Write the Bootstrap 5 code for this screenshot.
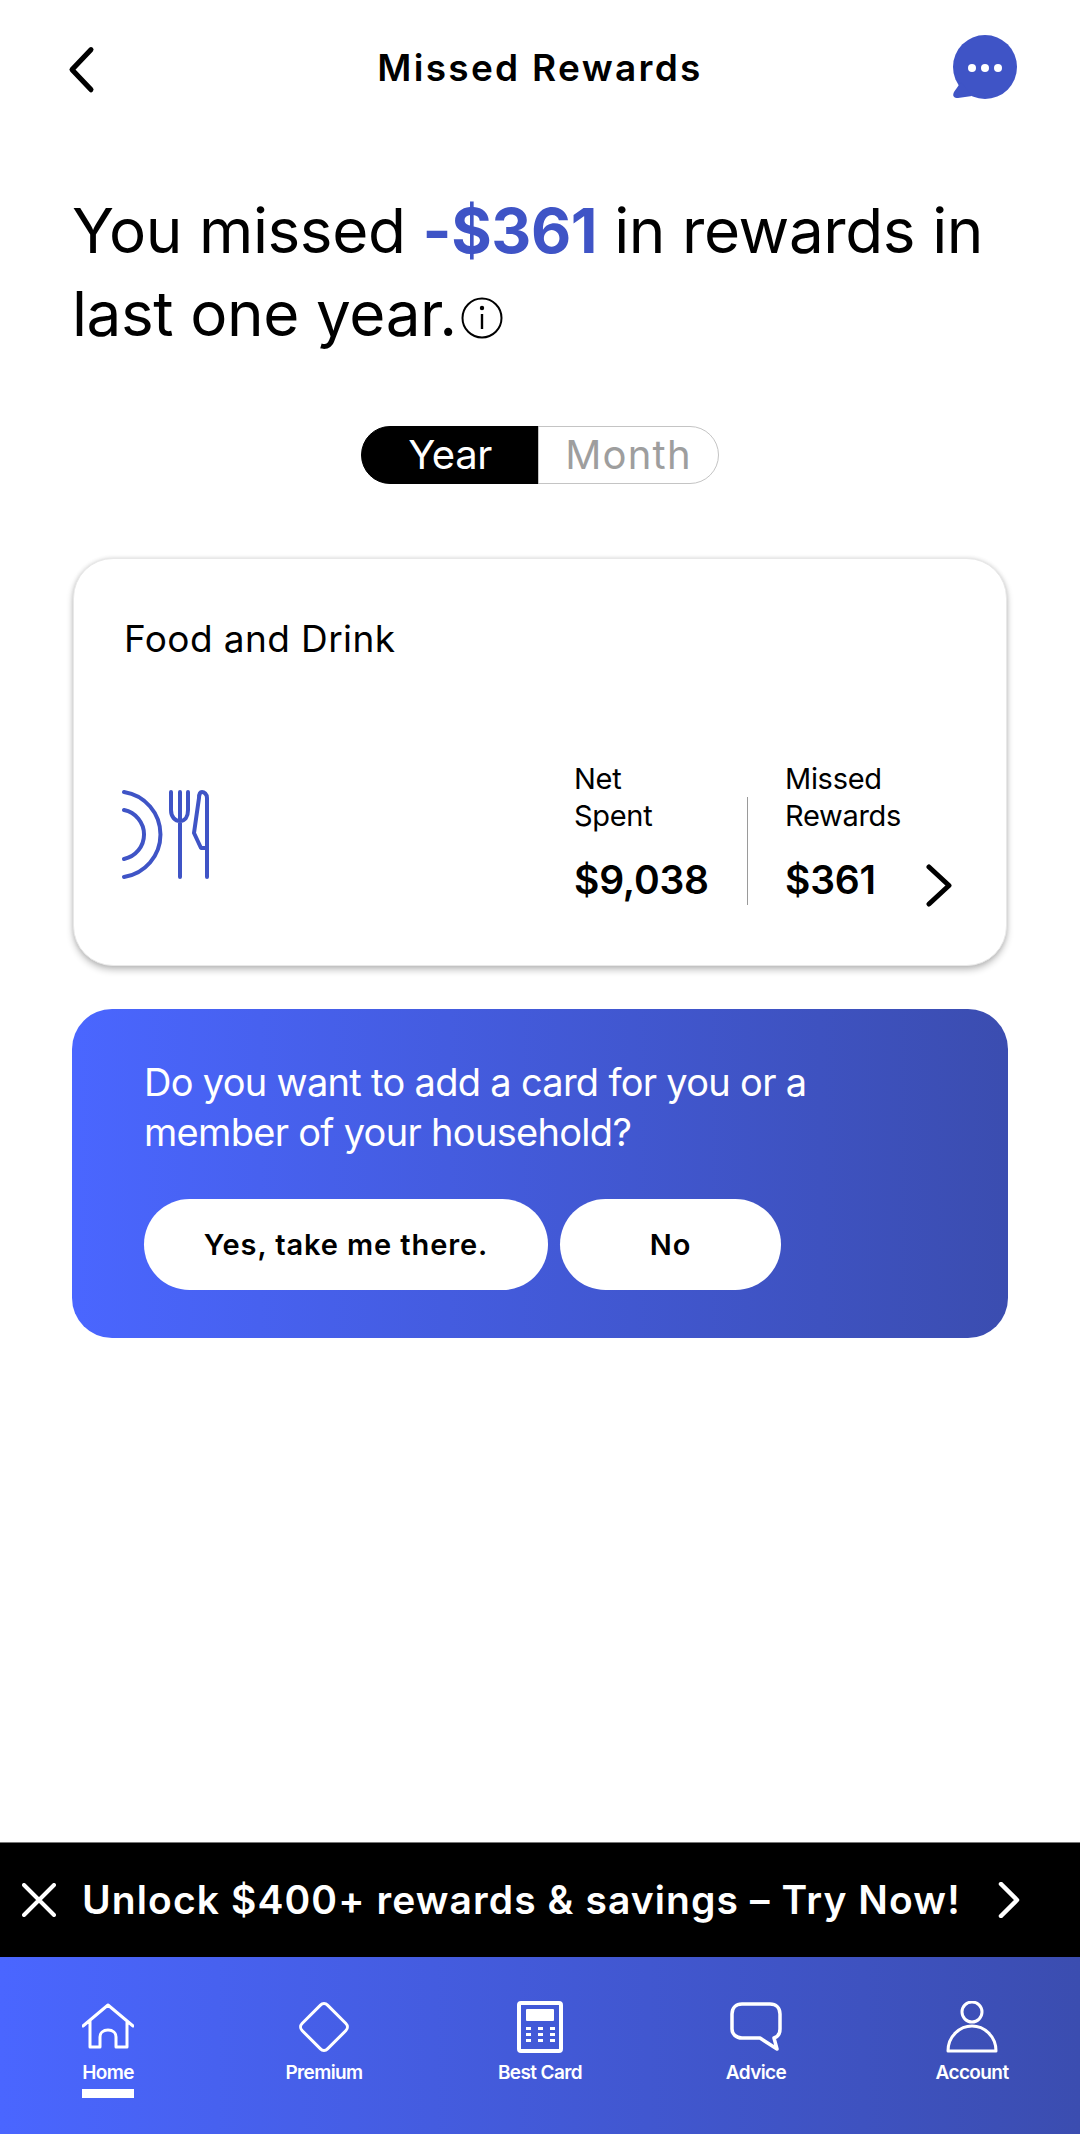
<!DOCTYPE html>
<html lang="en">
<head>
  <meta charset="UTF-8">
  <title>Missed Rewards</title>
  <meta name="viewport" content="width=device-width, initial-scale=1">
  <link href="https://cdn.jsdelivr.net/npm/bootstrap@5.3.3/dist/css/bootstrap.min.css" rel="stylesheet">
  <style>
    body { font-family: Inter, "Liberation Sans", sans-serif; color: #000; background: #fff; height: 2134px; width: 1080px; overflow: hidden; }
    .app-top { padding: 35px 62px 0; height: 100px; }
    .app-side { width: 66px; }
    .back-icon { margin-left: 2px; }
    .app-title { font-size: 37px; line-height: 66px; font-weight: 600; letter-spacing: 2.3px; }
    .hero { margin: 89px 72px 0; font-size: 62px; line-height: 83px; font-weight: 400; letter-spacing: -.4px; }
    .hero b { color: #3f54c6; font-weight: 700; }
    .hero svg { vertical-align: -3px; margin-left: 4px; }
    .period { margin-top: 71px; }
    .period .btn { height: 58px; font-size: 40px; line-height: 56px; padding: 0; border-radius: 29px; }
    .period .on { width: 178px; background: #000; color: #fff; border: 1px solid #000; letter-spacing: -.4px; }
    .period .off { width: 181px; background: #fff; color: #9e9e9e; border: 1px solid #c4c4c4; letter-spacing: 1.2px; }
    .spend-card { margin: 74px 73px 0 73px; height: 408px; border-radius: 40px; border: 1px solid #e8e8e8; box-shadow: 0 4px 7px rgba(0,0,0,.24), 0 0 4px rgba(0,0,0,.12); padding: 0 55px 0 50px; }
    .spend-name { font-size: 37px; line-height: 50px; margin-top: 55px; letter-spacing: .4px; }
    .spend-row { margin-top: 96px; }
    .stat-label { font-size: 29px; line-height: 37px; letter-spacing: -.3px; }
    .stat-value { font-size: 39px; line-height: 44px; font-weight: 600; margin-top: 24px; margin-bottom: 1px; letter-spacing: -.2px; }
    .stat-a { width: 173px; }
    .stat-b { width: 139px; margin-left: 37px; }
    .stat-rule { width: 1px; height: 108px; background: #9a9a9a; margin-bottom: -2px; }
    .stat-next { margin-bottom: -4px; margin-right: -2px; margin-left: 2px; }
    .plate-icon { margin-bottom: 22px; margin-left: -2px; }
    .ask-card { margin: 43px 72px 0; height: 329px; border-radius: 40px; padding: 48px 72px 0; color: #fff; background: linear-gradient(90deg, #4a66ff, #3b4db0); }
    .ask-text { font-size: 38px; line-height: 50px; letter-spacing: -.7px; }
    .ask-card .btn { height: 91px; background: #fff; color: #000; border: 0; font-size: 29px; font-weight: 600; letter-spacing: .9px; padding: 0; }
    .btn-yes { width: 404px; }
    .btn-no { width: 221px; margin-left: 12px; }
    .ask-btns { margin-top: 42px; }
    .promo { height: 115px; background: #000; color: #fff; padding: 0 60px 0 22px; border-top: 1px solid #777; }
    .promo-text { font-size: 39px; font-weight: 600; letter-spacing: 1.1px; margin-left: 26px; white-space: nowrap; }
    .tabbar { height: 177px; background: linear-gradient(90deg, #4a66ff, #3b4db0); color: #fff; padding-top: 44px; }
    .tab-item { height: 133px; }
    .tab-icon { height: 52px; }
    .tab-label { font-size: 19px; line-height: 24px; font-weight: 600; letter-spacing: -.6px; margin-top: 8px; }
    .tab-mark { width: 52px; height: 9px; background: #fff; margin-top: 4px; }
    .line-icon { fill: none; stroke: #fff; stroke-width: 3; stroke-linejoin: round; stroke-linecap: round; }
    .line-icon-bold { stroke-width: 3.5; }
  </style>
</head>
<body class="d-flex flex-column">

<!-- Header -->
<header class="app-top d-flex align-items-start justify-content-between">
  <div class="app-side">
    <svg class="back-icon" width="32" height="66" viewBox="0 0 32 66"><path d="M28 14 9 33l19 19" transform="translate(-1 0) scale(1 1.05)" fill="none" stroke="#000" stroke-width="5" stroke-linecap="round" stroke-linejoin="round"/></svg>
  </div>
  <div class="app-title">Missed Rewards</div>
  <div class="app-side">
    <svg width="66" height="66" viewBox="0 0 66 66"><circle cx="33" cy="32" r="32" fill="#3f54c6"/><path d="M9 47 2 57c-2 4 0 6 4 6l14-2z" fill="#3f54c6"/><circle cx="20" cy="33" r="4" fill="#fff"/><circle cx="33" cy="33" r="4" fill="#fff"/><circle cx="46" cy="33" r="4" fill="#fff"/></svg>
  </div>
</header>

<!-- Headline -->
<h1 class="hero">You missed <b>-$361</b> in rewards in last one year.<svg width="42" height="42" viewBox="0 0 42 42"><circle cx="21" cy="21" r="19.5" fill="none" stroke="#000" stroke-width="2"/><circle cx="21" cy="11" r="2.2"/><path d="M21 17v15" stroke="#000" stroke-width="2.4"/></svg></h1>

<!-- Year / Month toggle -->
<div class="period d-flex justify-content-center">
  <div class="btn-group" role="group">
    <button type="button" class="btn on">Year</button>
    <button type="button" class="btn off">Month</button>
  </div>
</div>

<!-- Category card -->
<div class="card spend-card">
  <div class="spend-name">Food and Drink</div>
  <div class="spend-row d-flex align-items-end justify-content-between">
    <svg class="plate-icon" width="90" height="92" viewBox="0 0 90 92" fill="none" stroke="#3f54c6" stroke-width="4" stroke-linecap="round" stroke-linejoin="round">
      <path d="M2 3a43 43 0 0 1 0 85M2 21a25 25 0 0 1 0 49"/>
      <path d="M49 3v18c0 7 4 11 9 11s8-4 8-11V3M58 3v85"/>
      <path d="M85 88V9c0-4-3-6-5-6s-3 3-3 6L72 44l7 15h6"/>
    </svg>
    <div class="d-flex align-items-end">
      <div class="stat-a">
        <div class="stat-label">Net<br>Spent</div>
        <div class="stat-value">$9,038</div>
      </div>
      <div class="stat-rule"></div>
      <div class="stat-b">
        <div class="stat-label">Missed<br>Rewards</div>
        <div class="stat-value">$361</div>
      </div>
      <svg class="stat-next" width="27" height="43" viewBox="0 0 27 43"><path d="M3 3l20 18.500L3 40" fill="none" stroke="#000" stroke-width="5" stroke-linecap="round" stroke-linejoin="round"/></svg>
    </div>
  </div>
</div>

<!-- Add a card prompt -->
<div class="ask-card">
  <div class="ask-text">Do you want to add a card for you or a<br>member of your household?</div>
  <div class="ask-btns d-flex">
    <button type="button" class="btn rounded-pill btn-yes">Yes, take me there.</button>
    <button type="button" class="btn rounded-pill btn-no">No</button>
  </div>
</div>

<!-- Promo strip -->
<div class="promo d-flex align-items-center mt-auto">
  <svg width="34" height="34" viewBox="0 0 34 34"><path d="M2 2l30 30M32 2 2 32" stroke="#fff" stroke-width="4" stroke-linecap="round"/></svg>
  <div class="promo-text">Unlock $400+ rewards &amp; savings – Try Now!</div>
  <svg class="ms-auto" width="22" height="36" viewBox="0 0 22 36"><path d="M3 2l16 16L3 34" fill="none" stroke="#fff" stroke-width="4.500" stroke-linecap="round" stroke-linejoin="round"/></svg>
</div>

<!-- Bottom tabs -->
<nav class="tabbar row g-0">
  <div class="col tab-item d-flex flex-column align-items-center">
    <svg class="tab-icon line-icon" width="52" height="52" viewBox="0 0 52 52"><path d="M1 25 26 4l25 21M8 20v26h10V36c0-4 3-7 8-7s8 3 8 7v10h11V20"/></svg>
    <div class="tab-label">Home</div>
    <div class="tab-mark"></div>
  </div>
  <div class="col tab-item d-flex flex-column align-items-center">
    <svg class="tab-icon line-icon" width="52" height="52" viewBox="0 0 52 52"><rect x="8" y="8" width="36" height="36" rx="5" transform="rotate(45 26 26)"/></svg>
    <div class="tab-label">Premium</div>
  </div>
  <div class="col tab-item d-flex flex-column align-items-center">
    <svg class="tab-icon" width="48" height="52" viewBox="0 0 48 52" fill="#fff"><rect x="3" y="2" width="42" height="48" rx="2" fill="none" stroke="#fff" stroke-width="4"/><rect x="10" y="8" width="28" height="12" rx="1"/><g><rect x="10" y="26" width="5" height="3"/><rect x="22" y="26" width="5" height="3"/><rect x="34" y="26" width="5" height="3"/><rect x="10" y="32" width="5" height="3"/><rect x="22" y="32" width="5" height="3"/><rect x="34" y="32" width="5" height="3"/><rect x="10" y="38" width="5" height="3"/><rect x="22" y="38" width="5" height="3"/><rect x="34" y="38" width="5" height="3"/></g></svg>
    <div class="tab-label">Best Card</div>
  </div>
  <div class="col tab-item d-flex flex-column align-items-center">
    <svg class="tab-icon line-icon line-icon-bold" width="52" height="52" viewBox="0 0 52 52"><path d="M12 3h28c6 0 10 4 10 10v15c0 5-3 8-6 9l3 11-17-11H12C6 37 2 33 2 28V13C2 7 6 3 12 3z"/></svg>
    <div class="tab-label">Advice</div>
  </div>
  <div class="col tab-item d-flex flex-column align-items-center">
    <svg class="tab-icon line-icon" width="52" height="52" viewBox="0 0 52 52"><circle cx="26" cy="11" r="10"/><path d="M2 50C2 35 14 25 26 25s24 10 24 25z"/></svg>
    <div class="tab-label">Account</div>
  </div>
</nav>

<script src="https://cdn.jsdelivr.net/npm/bootstrap@5.3.3/dist/js/bootstrap.bundle.min.js"></script>
</body>
</html>
